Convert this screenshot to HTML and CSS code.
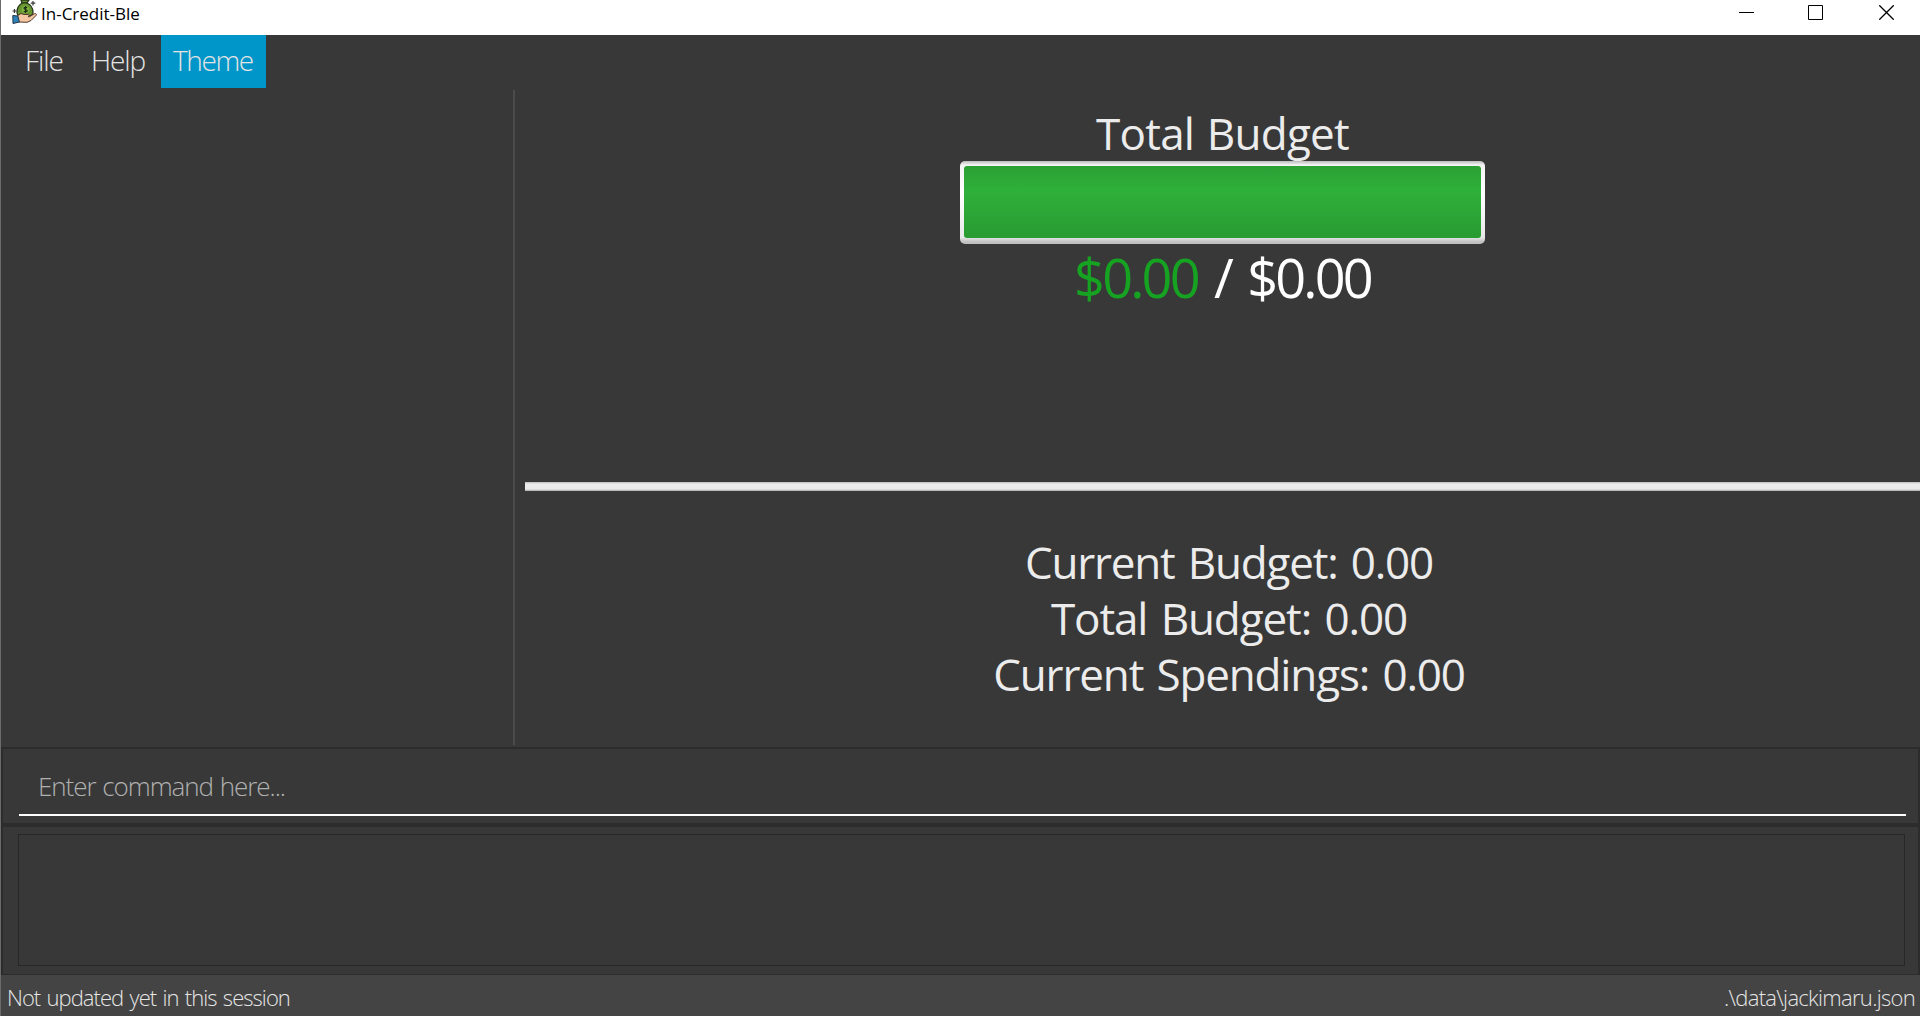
FILE: index.html
```html
<!DOCTYPE html>
<html lang="en">
<head>
<meta charset="utf-8">
<title>In-Credit-Ble</title>
<link rel="stylesheet" href="styles.css">
</head>
<body>
<header class="titlebar">
  <svg class="app-icon" width="26" height="26" viewBox="0 0 26 26">
    <path d="M9 0h8l-2 3c4 2 6 6 6 9 0 3-2 4-4 4H9c-3 0-4-2-4-4 0-4 2-7 5-9z" fill="#67952f" stroke="#29351c" stroke-width="1.3"/>
    <path d="M9.500 2.800h6.500" stroke="#29351c" stroke-width="1.4"/>
    <circle cx="13.500" cy="9.500" r="3.800" fill="#82b440"/>
    <path d="M15.200 7.800c-1-.8-3.200-.8-3.200.5 0 1.600 3.300.8 3.300 2.500 0 1.300-2.400 1.300-3.500.4M13.600 6v7" fill="none" stroke="#1d2b14" stroke-width="1.100"/>
    <path d="M5 16l4-2.500 3 1h4c1.500.2 1.500 2 0 2.200h1.500l5-3c1.500-.6 2.500.8 1.500 1.800l-5 5L15 22.300 7 22z" fill="#f3c7a2" stroke="#54392c" stroke-width="1"/>
    <path d="M.8 15.500l5 .5 1.600 6L1 23.500z" fill="#2d82b8" stroke="#20364a" stroke-width="1"/>
    <path d="M2.500 9v4M.5 11h4M21 1v4.500M18.800 3.200h4.500" stroke="#3a3a3a" stroke-width="1.200"/>
  </svg>
  <span class="app-name">In-Credit-Ble</span>
  <div class="window-controls">
    <svg width="15" height="15" viewBox="0 0 15 15"><path d="M0 7.500h15"/></svg>
    <svg width="15" height="15" viewBox="0 0 15 15"><path d="M.5.500h14v14H.5z"/></svg>
    <svg width="15" height="15" viewBox="0 0 15 15"><path d="M.3.300l14.400 14.400M14.700.300L.3 14.700" stroke-width="1.3"/></svg>
  </div>
</header>
<div class="window">
  <nav class="menubar">
    <span class="menu">File</span>
    <span class="menu menu-help">Help</span>
    <span class="menu menu-active">Theme</span>
  </nav>
  <main class="split">
    <section class="list-pane"></section>
    <section class="details">
      <div class="budget">
        <div class="budget-title">Total Budget</div>
        <div class="progress"><div class="progress-fill"></div></div>
        <div class="amount"><span class="amount-left">$0.00</span> / $0.00</div>
      </div>
      <div class="separator"></div>
      <div class="stats">
        <div class="stat-current">Current Budget: 0.00</div>
        <div class="stat-total">Total Budget: 0.00</div>
        <div class="stat-spent">Current Spendings: 0.00</div>
      </div>
    </section>
  </main>
  <section class="command"><div class="command-field"><span>Enter command here...</span></div></section>
  <section class="result"><div class="result-box"></div></section>
  <footer class="statusbar"><span>Not updated yet in this session</span><span class="path">.\data\jackimaru.json</span></footer>
</div>
</body>
</html>
```
FILE: styles.css
```css
* { box-sizing: border-box; }
body {
  margin: 0;
  width: 1920px;
  height: 1016px;
  overflow: hidden;
  display: flex;
  flex-direction: column;
  background: #383838;
  border-left: 1px solid #6b6b6b;
  font-family: "Open Sans", "Noto Sans", sans-serif;
  white-space: nowrap;
}
.titlebar {
  height: 35px;
  flex: none;
  display: flex;
  align-items: flex-start;
  padding-left: 11px;
  background: #fff;
}
.app-name {
  margin-left: 3px;
  font-size: 17px;
  line-height: 27px;
  color: #000;
}
.window-controls {
  display: flex;
  gap: 55px;
  margin-left: auto;
  padding: 5px 26px 0 0;
}
.window-controls svg { fill: none; stroke: #000; stroke-width: 1; }
.window-controls svg:first-child { margin-right: -1px; }
.window-controls svg:nth-child(2) { margin-right: 1px; }
.window { flex: 1; display: flex; flex-direction: column; min-height: 0; }
.menubar {
  height: 55px;
  flex: none;
  display: flex;
  align-items: flex-start;
  padding-left: 12px;
}
.menu {
  height: 53px;
  padding: 0 0 0 12px;
  width: 66px;
  font-size: 28px;
  font-weight: 300;
  line-height: 51px;
  letter-spacing: -1.1px;
  color: #e4e4e4;
}
.menu-help { width: 82px; letter-spacing: -1.1px; }
.menu-active { width: 105px; padding-left: 12px; letter-spacing: -1.4px; background: #0096c9; }
.split { height: 657px; flex: none; display: flex; }
.list-pane { width: 514px; border-right: 2px solid #4b4b4b; height: 655px; }
.details { flex: 1; display: flex; flex-direction: column; padding-left: 10px; font-size: 44px; color: #ececec; }
.budget {
  height: 392px;
  padding-top: 14px;
  display: flex;
  flex-direction: column;
  align-items: center;
}
.budget-title { line-height: 59px; height: 57px; letter-spacing: -0.75px; word-spacing: 2px; }
.progress {
  width: 525px;
  height: 83px;
  padding: 5px 4px 6px;
  border-radius: 5px;
  background: linear-gradient(#bcbcbc, #f4f4f4 4px, #fff 40%, #e8e8e8 92%, #c4c4c4 97%, #bdbdbd);
}
.progress-fill {
  height: 100%;
  border-radius: 3px;
  background: linear-gradient(#2ba034, #2fb03b 35%, #2da837 60%, #289b31);
}
.amount { font-size: 54px; line-height: 66px; letter-spacing: -2.8px; word-spacing: 5px; color: #fff; }
.amount-left { color: #16a322; }
.separator { height: 9px; background: linear-gradient(#bbb, #ededed 2px, #ebebeb 7px, #aaa); }
.stats {
  display: flex;
  flex-direction: column;
  align-items: center;
  padding: 43px 0 0 13px;
  line-height: 56px;
  word-spacing: 3px;
}
.stat-current { letter-spacing: -1.2px; }
.stat-total { letter-spacing: -1.1px; }
.stat-spent { letter-spacing: -1.15px; }
.command {
  height: 78px;
  flex: none;
  border: 2px solid #2c2c2c;
  padding: 14px 12px 0 16px;
}
.command-field {
  height: 53px;
  padding-left: 19px;
  border-bottom: 2px solid #fff;
  border-image: linear-gradient(#aaa, #fff) 2;
  border-width: 0 0 2px;
  font-size: 26px;
  font-weight: 300;
  line-height: 46px;
  letter-spacing: -1.05px;
  word-spacing: 1px;
  color: #b0b0b0;
}
.result {
  height: 150px;
  flex: none;
  border: 2px solid #2c2c2c;
  border-bottom-width: 1px;
  padding: 7px 13px 8px 15px;
}
.result-box { height: 132px; border: 1px solid #272727; }
.statusbar {
  flex: 1;
  display: flex;
  justify-content: space-between;
  padding: 0 5px 0 6px;
  background: #444;
  border-bottom: 1px solid #4b3e43;
  font-size: 22px;
  font-weight: 300;
  line-height: 45px;
  letter-spacing: -0.95px;
  word-spacing: 1.5px;
  color: #e6e6e6;
}
.path { letter-spacing: -0.7px; }
```
